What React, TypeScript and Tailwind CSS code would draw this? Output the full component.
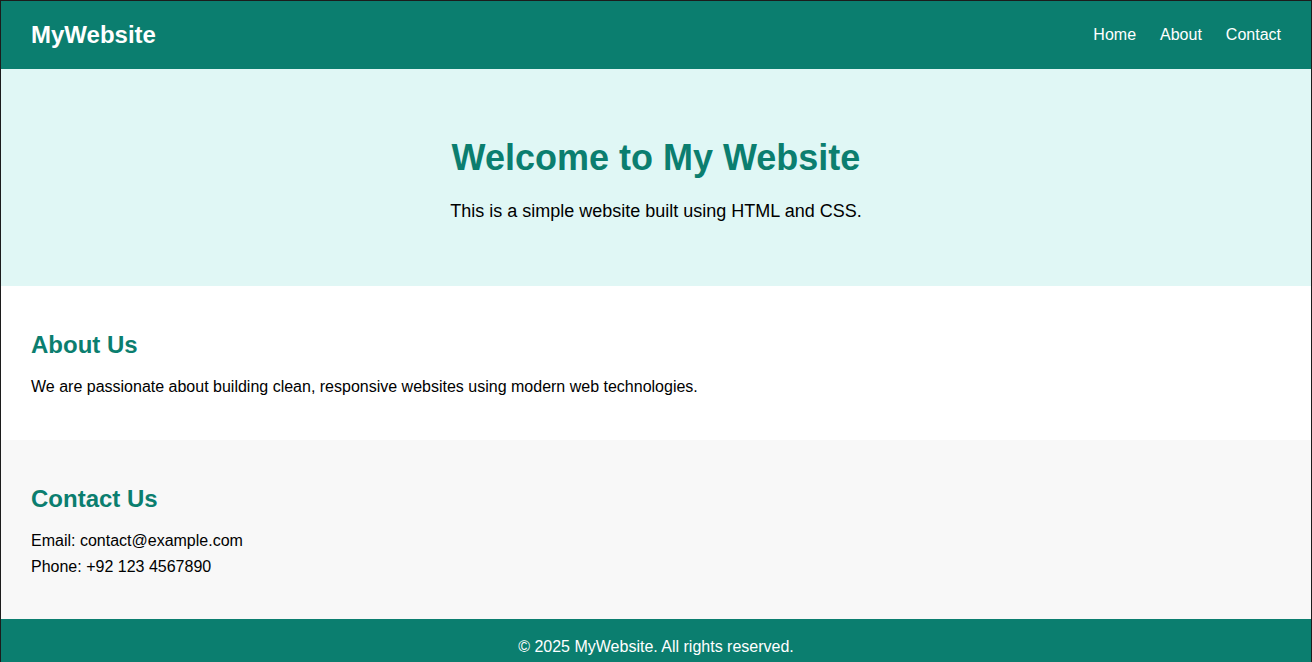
const navLinks = ['Home', 'About', 'Contact'];

export default function App() {
  return (
    <div className="min-h-[662px] border-x border-t border-[#1c1c1c] bg-white text-black font-['Liberation_Sans',Arial,sans-serif] leading-[1.6]">
      <header className="flex items-center justify-between bg-[#0b7e6f] px-[30px] py-[15px] text-white">
        <h1 className="text-2xl font-bold leading-[1.6]">MyWebsite</h1>
        <nav className="flex items-center gap-6 text-base">
          {navLinks.map((link) => (
            <a key={link} href="#" className="text-white">
              {link}
            </a>
          ))}
        </nav>
      </header>

      <section className="bg-[#e0f7f5] px-5 py-[60px] text-center">
        <h2 className="mb-[10px] text-[36px] font-bold leading-[1.6] text-[#0b7e6f]">
          Welcome to My Website
        </h2>
        <p className="text-lg leading-[1.6]">This is a simple website built using HTML and CSS.</p>
      </section>

      <section className="bg-white px-[30px] py-10">
        <h3 className="mb-[10px] text-2xl font-bold leading-[1.6] text-[#0b7e6f]">About Us</h3>
        <p className="text-base leading-[26px]">
          We are passionate about building clean, responsive websites using modern web technologies.
        </p>
      </section>

      <section className="bg-[#f8f8f8] px-[30px] pt-10 pb-[39px]">
        <h3 className="mb-[9px] text-2xl font-bold leading-[1.6] text-[#0b7e6f]">Contact Us</h3>
        <p className="text-base leading-[26px]">Email: contact@example.com</p>
        <p className="text-base leading-[26px]">Phone: +92 123 4567890</p>
      </section>

      <footer className="bg-[#0b7e6f] pt-[15px] pb-[15px] text-center text-base leading-[26px] text-white">
        © 2025 MyWebsite. All rights reserved.
      </footer>
    </div>
  );
}
